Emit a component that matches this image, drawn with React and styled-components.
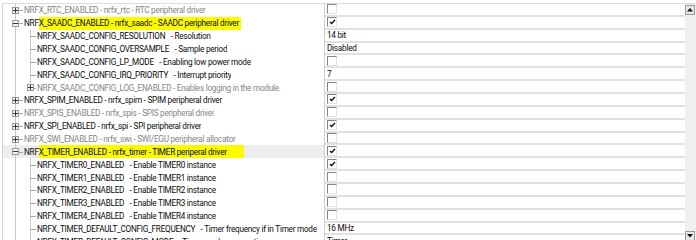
import React from 'react';
import styled, { createGlobalStyle, css } from 'styled-components';

const ROW_H = 12.86;
const FONT = css`
  font-size: 8.2px;
  letter-spacing: -0.25px;
`;

const Global = createGlobalStyle`
  html, body { margin: 0; padding: 0; background: #fff; overflow: hidden; }
  body { width: 696px; height: 240px; font-family: Roboto, "Noto Sans", sans-serif; }
`;

const Window = styled.div`
  height: 240px;
  padding-top: 3px;
  box-sizing: border-box;
  overflow: hidden;
`;

const Frame = styled.div`
  display: flex;
  height: 237px;
  margin-left: 2px;
  border-top: 1px solid #dcdcdc;
  border-left: 1px solid #d4d4d4;
`;

const Grid = styled.div`
  flex: 1;
  display: flex;
  flex-direction: column;
  overflow: hidden;
`;

const Row = styled.div`
  display: flex;
  flex: none;
  height: ${ROW_H}px;
`;

const NameCell = styled.div`
  width: 322px;
  flex: none;
  display: flex;
  align-items: stretch;
  box-sizing: border-box;
  border-right: 1px solid #cfcfcf;
  background: ${p => (p.$selected ? '#ededed' : '#fff')};
  white-space: pre;
  ${FONT}
  color: ${p => (p.$dim ? '#858585' : '#0c0c0c')};
`;

const Lane = styled.div`
  position: relative;
  flex: none;
  width: ${p => p.$w}px;
  ${p => p.$v && css`
    &::before {
      content: '';
      position: absolute;
      left: ${p.$x}px;
      top: 0;
      width: 1px;
      height: ${p.$end ? '50%' : '100%'};
      background: #c8c8c8;
    }
  `}
  ${p => p.$h && css`
    &::after {
      content: '';
      position: absolute;
      left: ${p.$x}px;
      top: 50%;
      width: ${p.$w - p.$x - 1}px;
      height: 1px;
      background: #a8a8a8;
    }
  `}
`;

const Expander = styled.div`
  position: absolute;
  z-index: 1;
  left: ${p => p.$x - 3}px;
  top: 50%;
  margin-top: -3.5px;
  width: 7px;
  height: 7px;
  box-sizing: border-box;
  border: 1px solid #9a9a9a;
  background: #f4f4f4;
  display: flex;
  align-items: center;
  justify-content: center;
`;

const Label = styled.div`
  display: flex;
  align-items: center;
  overflow: hidden;
`;

const Mark = styled.span`
  align-self: stretch;
  display: flex;
  align-items: center;
  box-sizing: border-box;
  background: #fbfb00;
  min-width: ${p => p.$min}px;
`;

const ValueCell = styled.div`
  flex: 1;
  display: flex;
  align-items: center;
  box-sizing: border-box;
  padding-left: 2px;
  border-bottom: 2px solid #e1e1e1;
  ${FONT}
  color: #0c0c0c;
  white-space: pre;
`;

const Box = styled.div`
  width: 10px;
  height: 10px;
  box-sizing: border-box;
  border-top: 1px solid #858585;
  border-left: 1px solid #858585;
  border-right: 1px solid #e2e2e2;
  border-bottom: 1px solid #e2e2e2;
  background: #fff;
  display: flex;
  align-items: flex-start;
  justify-content: flex-start;
`;

const Scrollbar = styled.div`
  width: 11px;
  flex: none;
  background: #f0f0f0;
  display: flex;
  flex-direction: column;
  justify-content: space-between;
  padding: 1px 0 0 0;
  box-sizing: border-box;
`;

const ScrollButton = styled.div`
  width: 10px;
  height: 10px;
  box-sizing: border-box;
  border: 1px solid #9a9a9a;
  background: #e6e6e6;
  display: flex;
  align-items: center;
  justify-content: center;
`;

const Sign = ({ open }) => (
  <svg width="5" height="5" viewBox="0 0 5 5">
    <rect x="0" y="2" width="5" height="1" fill="#3a3a3a" />
    {!open && <rect x="2" y="0" width="1" height="5" fill="#3a3a3a" />}
  </svg>
);

const Check = () => (
  <svg width="7" height="6" viewBox="0 0 7 6" style={{ marginLeft: 1, marginTop: 1 }}>
    <path d="M1 3 L2.6 4.6 L6 1" fill="none" stroke="#111" strokeWidth="1.4" />
  </svg>
);

const Arrow = ({ down }) => (
  <svg width="6" height="4" viewBox="0 0 6 4">
    {down ? <path d="M0 0 H6 L3 3.5 Z" fill="#111" /> : <path d="M0 3.5 H6 L3 0 Z" fill="#111" />}
  </svg>
);

const rows = [
  { lvl: 0, exp: 'closed', dim: true, text: 'NRFX_RTC_ENABLED - nrfx_rtc - RTC peripheral driver', val: false },
  { lvl: 0, exp: 'open', text: 'NRFX_SAADC_ENABLED - nrfx_saadc - SAADC peripheral driver', hl: 3, min: 202, val: true },
  { lvl: 1, text: 'NRFX_SAADC_CONFIG_RESOLUTION   - Resolution', val: '14 bit' },
  { lvl: 1, text: 'NRFX_SAADC_CONFIG_OVERSAMPLE   - Sample period', val: 'Disabled' },
  { lvl: 1, text: 'NRFX_SAADC_CONFIG_LP_MODE   - Enabling low power mode', val: false },
  { lvl: 1, text: 'NRFX_SAADC_CONFIG_IRQ_PRIORITY   - Interrupt priority', val: '7' },
  { lvl: 1, exp: 'closed', end: true, dim: true, text: 'NRFX_SAADC_CONFIG_LOG_ENABLED - Enables logging in the module.', val: false },
  { lvl: 0, exp: 'closed', text: 'NRFX_SPIM_ENABLED - nrfx_spim - SPIM peripheral driver', val: true },
  { lvl: 0, exp: 'closed', dim: true, text: 'NRFX_SPIS_ENABLED - nrfx_spis - SPIS peripheral driver', val: false },
  { lvl: 0, exp: 'closed', text: 'NRFX_SPI_ENABLED - nrfx_spi - SPI peripheral driver', val: true },
  { lvl: 0, exp: 'closed', dim: true, text: 'NRFX_SWI_ENABLED - nrfx_swi - SWI/EGU peripheral allocator', val: false },
  { lvl: 0, exp: 'open', sel: true, text: 'NRFX_TIMER_ENABLED - nrfx_timer - TIMER periperal driver', hl: 3, min: 205, val: true },
  { lvl: 1, text: 'NRFX_TIMER0_ENABLED   - Enable TIMER0 instance', val: true },
  { lvl: 1, text: 'NRFX_TIMER1_ENABLED   - Enable TIMER1 instance', val: false },
  { lvl: 1, text: 'NRFX_TIMER2_ENABLED   - Enable TIMER2 instance', val: false },
  { lvl: 1, text: 'NRFX_TIMER3_ENABLED   - Enable TIMER3 instance', val: false },
  { lvl: 1, text: 'NRFX_TIMER4_ENABLED   - Enable TIMER4 instance', val: false },
  { lvl: 1, text: 'NRFX_TIMER_DEFAULT_CONFIG_FREQUENCY   - Timer frequency if in Timer mode', val: '16 MHz' },
  { lvl: 1, text: 'NRFX_TIMER_DEFAULT_CONFIG_MODE   - Timer mode or operation', val: 'Timer' },
];

const TreeRow = ({ r }) => {
  const label = r.hl != null ? (
    <Label>
      {r.text.slice(0, r.hl)}
      <Mark $min={r.min}>{r.text.slice(r.hl)}</Mark>
    </Label>
  ) : (
    <Label>{r.text}</Label>
  );
  return (
    <Row>
      <NameCell $selected={r.sel} $dim={r.dim}>
        {r.lvl === 0 ? (
          <Lane $w={21} $x={12} $v $h>
            {r.exp && <Expander $x={12}><Sign open={r.exp === 'open'} /></Expander>}
          </Lane>
        ) : (
          <>
            <Lane $w={21} $x={12} $v />
            <Lane $w={13} $x={6} $v $h $end={r.end}>
              {r.exp && <Expander $x={6}><Sign open={r.exp === 'open'} /></Expander>}
            </Lane>
          </>
        )}
        {label}
      </NameCell>
      <ValueCell>
        {typeof r.val === 'boolean' ? <Box>{r.val && <Check />}</Box> : r.val}
      </ValueCell>
    </Row>
  );
};

export default function App() {
  return (
    <>
      <Global />
      <Window>
        <Frame>
          <Grid>
            {rows.map((r, i) => <TreeRow key={i} r={r} />)}
          </Grid>
          <Scrollbar>
            <ScrollButton><Arrow /></ScrollButton>
            <ScrollButton><Arrow down /></ScrollButton>
          </Scrollbar>
        </Frame>
      </Window>
    </>
  );
}
